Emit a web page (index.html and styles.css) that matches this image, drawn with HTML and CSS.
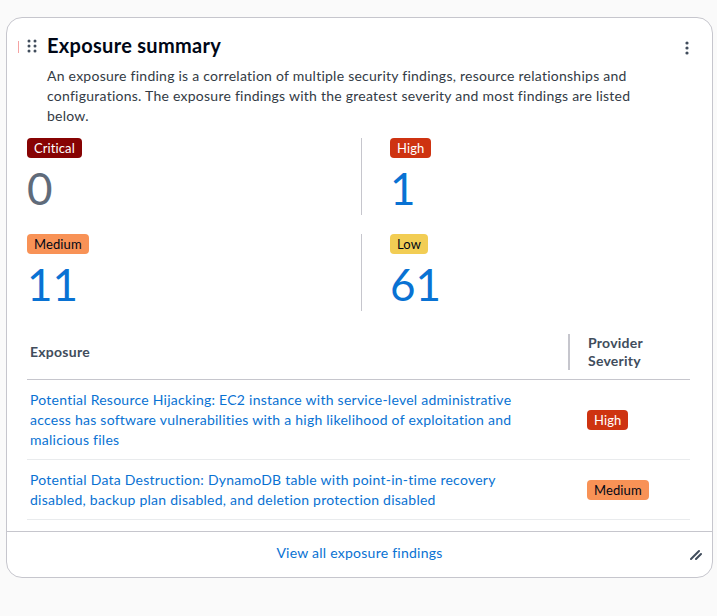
FILE: index.html
```html
<!DOCTYPE html>
<html lang="en">
<head>
    <meta charset="UTF-8">
    <meta name="viewport" content="width=device-width, initial-scale=1.0">
    <title>Exposure summary</title>
    <link rel="stylesheet" href="styles.css">
</head>
<body>

<div class="card">
    <div class="card-header">
        <span class="focus-mark"></span>
        <span class="drag-handle">
            <svg width="10" height="14" viewBox="0 0 10 14">
                <circle cx="2" cy="2" r="1.5" />
                <circle cx="8" cy="2" r="1.5" />
                <circle cx="2" cy="7" r="1.5" />
                <circle cx="8" cy="7" r="1.5" />
                <circle cx="2" cy="12" r="1.5" />
                <circle cx="8" cy="12" r="1.5" />
            </svg>
        </span>
        <div class="header-text">
            <h2 class="title">Exposure summary</h2>
            <p class="description">An exposure finding is a correlation of multiple security findings, resource relationships and configurations. The exposure findings with the greatest severity and most findings are listed below.</p>
        </div>
        <span class="kebab">
            <svg width="4" height="14" viewBox="0 0 4 14">
                <circle cx="2" cy="2" r="1.6" />
                <circle cx="2" cy="7" r="1.6" />
                <circle cx="2" cy="12" r="1.6" />
            </svg>
        </span>
    </div>

    <div class="stats">
        <div class="stat">
            <span class="badge critical">Critical</span>
            <div class="stat-value zero">0</div>
        </div>
        <div class="stat divided">
            <span class="badge high">High</span>
            <div class="stat-value">1</div>
        </div>
        <div class="stat">
            <span class="badge medium">Medium</span>
            <div class="stat-value">11</div>
        </div>
        <div class="stat divided">
            <span class="badge low">Low</span>
            <div class="stat-value">61</div>
        </div>
    </div>

    <div class="findings">
        <div class="findings-head">
            <div class="col-name">Exposure</div>
            <div class="col-severity">Provider<br>Severity</div>
        </div>
        <div class="finding-row">
            <div class="col-name"><a href="#">Potential Resource Hijacking: EC2 instance with service-level administrative access has software vulnerabilities with a high likelihood of exploitation and malicious files</a></div>
            <div class="col-severity"><span class="badge high">High</span></div>
        </div>
        <div class="finding-row">
            <div class="col-name"><a href="#">Potential Data Destruction: DynamoDB table with point-in-time recovery disabled, backup plan disabled, and deletion protection disabled</a></div>
            <div class="col-severity"><span class="badge medium">Medium</span></div>
        </div>
    </div>

    <div class="card-footer">
        <a href="#">View all exposure findings</a>
        <span class="resize">
            <svg width="12" height="12" viewBox="0 0 12 12">
                <path d="M1 11 L9 3 M6 11 L11 6" />
            </svg>
        </span>
    </div>
</div>

</body>
</html>
```

FILE: styles.css
```css
body {
    margin: 0;
    padding: 17px 4px 0 6px;
    background-color: #fafafa;
    font-family: Lato, "Liberation Sans", sans-serif;
    font-size: 14px;
    line-height: 20px;
    letter-spacing: 0.25px;
    color: #000716;
}

a {
    color: #0972d3;
    text-decoration: none;
}

.card {
    width: 705px;
    background-color: #fff;
    border: 1px solid #c6c6cd;
    border-radius: 16px;
}

.card-header {
    display: flex;
    align-items: flex-start;
    padding: 15px 20px 0 11px;
}

.focus-mark {
    width: 1px;
    height: 12px;
    margin: 8px 8px 0 0;
    background-color: #f5a3a3;
}

.drag-handle {
    width: 20px;
    padding-top: 5px;
    fill: #414d5c;
}

.header-text {
    flex: 1;
}

.title {
    margin: 0;
    font-size: 20px;
    line-height: 24px;
    font-weight: 700;
    letter-spacing: 0.3px;
    color: #000716;
}

.description {
    margin: 9px 0 0;
    color: #333b45;
    padding-right: 30px;
}

.kebab {
    padding: 7px 3px 0 0;
    fill: #414d5c;
}

.stats {
    display: grid;
    grid-template-columns: 334px 1fr;
    row-gap: 19px;
    padding: 12px 20px 0 20px;
}

.stat {
    display: flex;
    flex-direction: column;
    align-items: flex-start;
}

.stat.divided {
    border-left: 1px solid #c6c6cd;
    padding-left: 28px;
}

.stat-value {
    padding-top: 4px;
    font-size: 44px;
    line-height: 53px;
    letter-spacing: 0;
    color: #0972d3;
}

.stat-value.zero {
    color: #5f6b7a;
}

.badge {
    display: inline-block;
    padding: 0 7px;
    border-radius: 4px;
    font-size: 13px;
    line-height: 20px;
    letter-spacing: 0.1px;
    color: #fff;
}

.badge.critical {
    background-color: #870303;
}

.badge.high {
    background-color: #ce3311;
}

.badge.medium {
    background-color: #f89256;
    color: #000716;
}

.badge.low {
    background-color: #f2cd54;
    color: #000716;
}

.findings {
    margin: 23px 22px 0 20px;
}

.findings-head,
.finding-row {
    display: grid;
    grid-template-columns: 541px 1fr;
    align-items: center;
}

.findings-head {
    border-bottom: 1px solid #c6c6cd;
    padding: 0 0 9px;
    font-weight: 700;
    color: #414d5c;
}

.findings-head .col-severity {
    border-left: 2px solid #c6c6cd;
    padding-left: 18px;
    line-height: 18px;
}

.finding-row {
    border-bottom: 1px solid #e9ebed;
    padding: 10px 0 9px;
}

.col-name {
    padding: 0 30px 0 3px;
}

.finding-row .col-severity {
    padding-left: 19px;
}

.card-footer {
    margin-top: 11px;
    border-top: 1px solid #c6c6cd;
    position: relative;
    text-align: center;
    padding: 11px 0 14px;
}

.resize {
    position: absolute;
    right: 10px;
    bottom: 12px;
    stroke: #414d5c;
    stroke-width: 2;
    stroke-linecap: round;
}
```
